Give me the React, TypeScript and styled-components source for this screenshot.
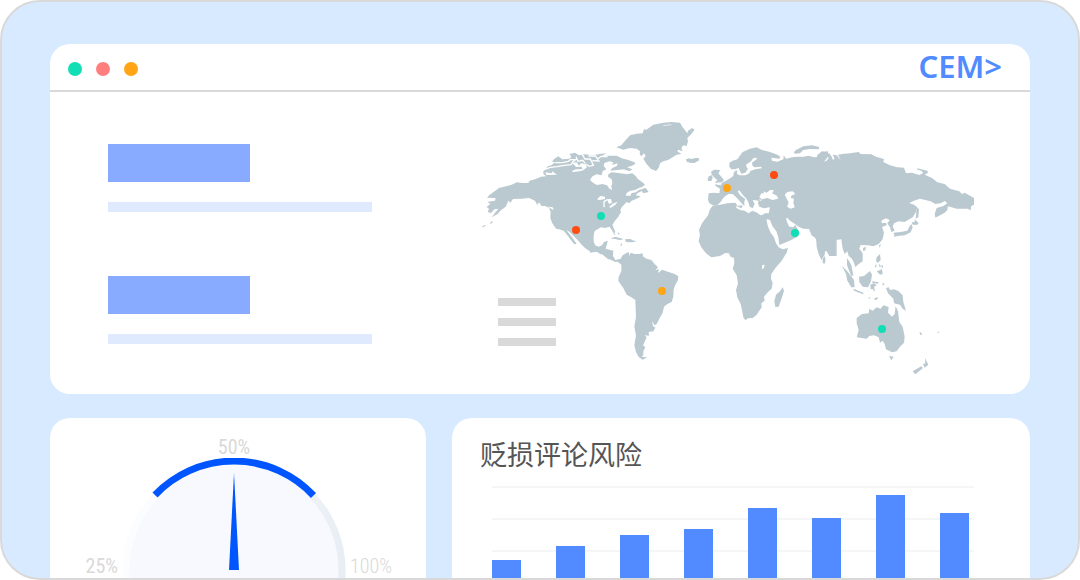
import React from "react";
import styled, { createGlobalStyle } from "styled-components";

const GlobalStyle = createGlobalStyle`
  *, *::before, *::after { box-sizing: border-box; }
  body { margin: 0; background: #fff; font-family: "Noto Sans", "Noto Sans CJK SC", sans-serif; }
  h1, h2, p { margin: 0; }
`;

const Frame = styled.main`
  height: 100vh;
  overflow: hidden;
  padding: 42px 48px 0;
  border: 2px solid #d9d9d9;
  border-radius: 40px;
  background: #d8eaff;
  display: flex;
  flex-direction: column;
  gap: 24px;
`;

const Panel = styled.section`
  flex: none;
  background: #fff;
  border-radius: 20px;
`;

const TitleBar = styled.header`
  display: flex;
  align-items: center;
  justify-content: space-between;
  height: 48px;
  padding: 0 28px 0 18px;
  border-bottom: 2px solid #d9d9d9;
`;

const Lights = styled.div`
  display: flex;
  gap: 14px;
  padding-top: 4px;
`;

const Light = styled.span<{ $color: string }>`
  width: 14px;
  height: 14px;
  border-radius: 50%;
  background: ${(p) => p.$color};
`;

const Brand = styled.h1`
  padding-bottom: 2px;
  font: 600 31px/44px "Noto Sans", sans-serif;
  color: #518bff;
`;

const Overview = styled.div`
  display: flex;
  justify-content: space-between;
  padding: 18px 50px 14px 58px;
`;

const Metrics = styled.div`
  display: flex;
  flex-direction: column;
  gap: 64px;
  padding-top: 34px;
`;

const Metric = styled.div`
  display: flex;
  flex-direction: column;
  gap: 20px;
`;

const MetricBlock = styled.div`
  width: 142px;
  height: 38px;
  background: #88abff;
`;

const MetricLine = styled.div`
  width: 264px;
  height: 10px;
  background: #dfeaff;
`;

const MapArea = styled.div`
  display: grid;
  > * { grid-area: 1 / 1; }
`;

const MapSvg = styled.svg`
  display: block;
  width: 505px;
  height: 270px;
`;

const Legend = styled.div`
  align-self: end;
  display: flex;
  flex-direction: column;
  gap: 12px;
  padding: 0 0 34px 23px;
`;

const LegendLine = styled.div`
  width: 58px;
  height: 8px;
  background: #d9d9d9;
`;

const Cards = styled.div`
  flex: none;
  display: grid;
  grid-template-columns: 376fr 578fr;
  gap: 26px;
`;

const GaugeCard = styled(Panel)`
  display: flex;
  flex-direction: column;
  align-items: center;
  padding: 18px 8px 0 0;
`;

const GaugeLabel = styled.p<{ $weight?: number }>`
  font: ${(p) => p.$weight ?? 400} 20px/22px "Roboto Condensed", "Liberation Sans Narrow", Roboto, sans-serif;
  color: #d9d9d9;
`;

const GaugeRow = styled.div`
  display: flex;
  justify-content: center;
  gap: 4px;
  > p { width: 48px; padding-top: 97px; }
  > p:first-child { text-align: right; }
`;

const GaugeSvg = styled.svg`
  display: block;
  width: 224px;
  height: 224px;
`;

const ChartCard = styled(Panel)`
  padding: 16px 56px 40px 28px;
`;

const ChartTitle = styled.h2`
  font: 400 27px/40px "Noto Sans CJK SC", sans-serif;
  color: #555;
`;

const Plot = styled.div`
  display: grid;
  height: 130px;
  margin: 12px 0 0 12px;
  > * { grid-area: 1 / 1; }
`;

const GridLines = styled.div`
  display: flex;
  flex-direction: column;
  gap: 30px;
`;

const GridLine = styled.div`
  height: 2px;
  background: #f5f6f7;
`;

const Bars = styled.div`
  display: flex;
  align-items: flex-end;
  justify-content: space-between;
  padding-right: 5px;
`;

const Bar = styled.div`
  width: 29px;
  background: #518bff;
`;

const LIGHTS = ["#12deb6", "#ff7f7f", "#ffa516"];
const BARS = [56, 70, 81, 87, 108, 98, 121, 103];
const PINS = [
  { x: 601, y: 216, color: "#12deb6" },
  { x: 576, y: 230, color: "#ff4d12" },
  { x: 662, y: 291, color: "#ffa516" },
  { x: 727, y: 188, color: "#ffa516" },
  { x: 774, y: 175, color: "#ff4d12" },
  { x: 795, y: 233, color: "#12deb6" },
  { x: 882, y: 329, color: "#12deb6" },
];

const at = (x: number, y: number) => `translate(${x} ${y}) scale(${1 / 3})`;

function WorldMap() {
  return (
    <MapSvg viewBox="475 110 505 270" role="img" aria-label="World map" fill="#bac9d0">
      {/* North America */}
      <g transform={at(475, 110)}>
        <path d="M36 263L44 254 56 246 72 234 84 231 108 225 126 217 142 219 160 219 164 212 182 207 198 200 214 199 205 192 205 184 212 177 219 168 228 166 241 157 231 155 238 146 250 139 262 148 284 146 289 140 283 132 300 128 312 136 330 133 352 136 378 131 394 130 380 138 400 137 425 137 440 145 460 150 479 157 480 163 468 168 456 172 472 178 465 183 450 180 444 188 456 193 472 190 482 198 488 206 504 218 510 224 498 233 513 235 521 246 505 250 500 243 488 249 482 256 497 259 490 264 470 272 462 280 455 276 447 284 440 292 436 300 438 306 430 320 420 332 412 344 416 354 421 366 417 371 409 358 404 350 390 354 378 352 360 362 354 378 356 396 362 408 372 412 382 408 390 396 398 394 394 408 390 419 402 422 414 425 414 440 418 450 400 448 390 440 376 428 362 424 348 426 330 414 318 402 308 390 296 378 284 366 274 360 290 380 305 401 298 403 286 388 276 374 266 362 252 358 243 356 232 340 226 324 227 306 222 293 210 288 200 288 192 277 187 285 180 272 162 264 140 266 114 267 106 278 100 272 92 290 76 302 68 312 50 322 62 306 70 296 58 298 48 309 38 306 42 297 35 290 46 283 38 275 60 272 62 264Z" />
        <path d="M21 349L31 345 32 348 24 352ZM45 339L52 332 53 337 47 342ZM407 387L420 382 438 386 444 390 434 389 418 386ZM450 388L462 387 482 394 472 397 452 395ZM430 380L434 386M437 400L442 402 439 406ZM428 366L434 372 430 374Z" />
        <g fill="#fff">
          <path d="M345 210L351 200 364 193 380 196 383 183 394 178 386 168 388 159 404 154 415 157 411 165 428 160 426 168 412 174 406 182 426 180 450 178 449 183 462 191 446 191 430 189 410 187 400 193 399 200 410 208 412 219 409 229 411 241 402 235 396 226 382 222 366 225 354 218Z" />
          <path d="M366 268L376 258 390 260 390 267 373 270ZM385 274L394 268 408 267 411 278 402 282 397 271 389 276 389 292 385 291ZM402 291L413 281 428 275 421 284 408 293ZM454 250L464 243 480 240 497 232 508 236 493 239 482 247 469 250 466 257 453 257ZM219 290L232 291 237 299 231 298ZM211 187L230 190 232 184 246 194 214 195Z" />
          <path d="M290 184L302 178 322 178 320 170 303 171 291 158 305 157 312 167 318 160 330 162 336 172 322 182 296 186Z" />
        </g>
        <g fill="none" stroke="#fff" strokeWidth="4">
          <path d="M208 179L226 172 246 170 268 166 288 164 294 156M241 158L262 158 280 154 288 148M303 140L309 154 323 151 331 160M322 134L330 147 346 147 355 166 342 169 332 162M340 138L362 138 368 148 378 139 398 140M352 152L374 153M292 156L302 149 288 149" />
        </g>
      </g>

      {/* Greenland and Iceland */}
      <g transform={at(600, 110)}>
        <path d="M49 112L64 106 74 94 90 76 110 71 128 70 132 57 138 60 160 44 190 38 215 36 240 38 248 52 262 70 264 62 276 54 284 59 272 74 262 84 264 94 260 108 250 106 244 114 248 124 234 119 232 124 244 132 230 134 218 142 204 150 190 154 180 160 176 174 168 183 152 176 138 160 130 146 137 138 132 130 124 139 119 132 120 124 110 116 90 114 70 119Z" />
        <path d="M258 148L268 145 280 150 286 145 296 144 297 150 284 158 270 158 260 155Z" />
        <path d="M190 47L214 44" stroke="#fff" strokeWidth="2" />
      </g>

      {/* Central and South America */}
      <g transform={at(590, 230)}>
        <path d="M0 0L12 0 10 34 14 46 26 50 36 46 42 36 53 33 49 46 46 56 58 59 70 62 69 78 76 90 92 86 84 94 76 96 64 90 54 80 46 73 32 73 20 65 0 68Z" />
        <path d="M80 93L92 86 98 76 108 70 116 66 118 77 122 68 134 72 150 72 157 69 160 80 170 86 184 90 194 102 204 112 196 121 206 117 205 129 216 119 236 126 254 132 265 139 264 150 256 164 251 178 250 200 245 216 232 222 222 230 218 248 208 266 200 282 194 286 186 274 189 288 196 293 190 304 176 306 177 317 164 316 170 322 162 340 159 346 166 352 160 364 160 374 156 381 172 382 158 389 146 381 138 366 133 345 138 316 133 290 138 260 136 210 124 202 110 194 100 174 85 153 86 140 94 124 94 104Z" />
        <path d="M64 24L78 21 100 27 88 29ZM109 29L124 28 127 36 111 37ZM132 32L138 33 134 37ZM91 43L97 45 93 48ZM70 8L76 13 74 16ZM84 10L90 11 87 13Z" />
      </g>

      {/* Europe, the Middle East and western Russia */}
      <g transform={at(690, 130)}>
        <path d="M56 190L72 188 88 190 90 176 77 168 75 163 92 166 96 158 108 152 118 146 130 138 131 128 138 121 143 124 140 130 148 136 166 136 178 130 181 123 196 118 215 115 214 110 192 112 187 106 186 98 200 88 200 83 190 84 184 93 168 104 170 112 174 116 166 128 154 131 148 120 146 113 136 118 124 118 118 110 118 98 128 92 142 88 158 66 180 56 200 52 216 60 240 66 262 74 271 80 268 86 244 83 246 92 262 95 280 88 281 76 288 86 306 82 322 80 340 80 356 77 366 84 380 81 388 88 386 76 400 65 414 64 414 80 400 98 420 88 440 90 440 378 418 378 410 364 385 364 380 330 368 316 360 297 340 296 326 290 312 280 300 272 292 263 288 266 292 278 298 290 310 292 316 284 322 296 329 308 322 320 304 330 290 336 268 345 265 322 259 304 247 288 240 270 232 268 222 250 236 250 240 232 222 235 208 230 204 220 206 212 196 211 188 210 194 222 188 235 179 230 175 216 168 205 158 194 148 181 143 184 150 195 166 208 163 214 163 228 155 220 140 203 128 192 116 192 106 198 98 206 92 216 82 225 72 227 58 220 54 209Z" />
        <path d="M64 124L74 119 91 120 85 130 94 140 102 150 96 157 74 158 82 150 74 144 64 132ZM53 146L57 138 66 136 68 144 64 153 54 153ZM312 66L318 60 340 49 366 46 388 51 386 58 360 57 340 60 330 70 314 71ZM138 228L158 226 155 235ZM180 244L196 242 190 246ZM0 88L20 83 27 91 12 99 0 97Z" />
        <g fill="#fff">
          <path d="M208 202L214 190 222 190 220 184 230 188 240 180 252 181 246 190 262 198 264 206 248 210 232 204 216 208ZM284 194L292 186 308 184 316 192 304 197 302 204 312 206 310 218 314 232 302 236 291 230 296 218 289 204ZM206 208L216 209 212 213Z" />
        </g>
      </g>

      {/* Africa */}
      <g transform={at(690, 200)}>
        <path d="M68 17L90 14 112 10 136 8 141 14 138 23 150 30 164 32 176 40 182 35 198 36 212 46 226 41 234 44 230 62 234 80 242 98 252 112 258 130 266 142 278 148 294 144 290 158 274 184 256 204 244 222 243 236 248 248 245 266 234 276 222 290 224 302 214 310 215 322 200 344 188 354 174 355 166 361 160 352 156 330 152 312 142 292 138 270 144 250 140 226 128 206 133 190 132 174 122 170 116 160 106 159 90 168 64 172 48 160 34 142 26 124 30 104 27 90 36 70 54 46 60 28Z" />
        <path d="M278 262L282 272 276 292 266 320 256 321 253 304 258 284 270 274Z" />
        <path fill="#fff" d="M216 196L224 194 222 204 216 208Z" />
      </g>

      {/* Asia */}
      <g transform={at(810, 130)}>
        <path d="M-2 78L20 84 22 75 36 64 46 66 44 78 38 97 50 92 56 84 50 73 58 70 66 82 70 95 73 84 68 74 80 76 92 90 84 74 96 72 120 70 146 66 152 72 184 73 198 80 222 87 220 96 240 106 262 112 282 113 288 130 306 128 328 135 340 129 334 122 322 119 322 115 352 122 354 128 344 134 366 144 382 157 404 162 420 176 448 184 456 192 464 188 492 204 492 224 484 228 482 241 472 236 440 236 414 229 412 240 404 248 376 263 374 252 380 234 400 228 412 220 404 213 392 220 376 222 362 214 330 206 312 212 298 219 312 224 322 232 318 246 308 262 284 276 266 274 252 280 248 290 254 302 244 306 240 292 232 280 239 270 228 265 214 272 216 280 228 278 230 286 216 291 222 308 218 328 206 342 190 349 174 346 152 345 148 356 158 370 158 394 146 402 136 411 132 398 124 384 116 378 112 364 104 372 98 356 94 328 78 330 62 342 46 352 44 374 34 390 26 372 20 350 18 321 6 318 -2 300Z" />
        <path d="M320 234L327 236 325 262 317 266ZM314 268L326 280 322 284 308 284 305 277 314 276ZM304 282L308 292 302 307 284 316 262 318 254 321 251 308 272 306 292 302 298 290ZM159 354L168 350 166 361 160 364ZM207 346L213 342 209 354ZM38 386L44 378 47 392 43 402 38 398Z" />
      </g>

      {/* South-east Asia and Oceania */}
      <g transform={at(800, 230)}>
        <path d="M126 108L142 124 162 150 164 172 154 172 142 152 138 132ZM141 84L149 96 154 106 160 136 154 138 145 116 141 106ZM160 176L190 188 190 193 162 182ZM177 140L192 138 210 123 216 134 213 154 204 172 188 170 178 156ZM211 164L220 160 231 166 222 170 226 186 218 177 212 178ZM216 154L236 157 234 161 218 159ZM248 158L254 162 248 168ZM206 201L212 204 207 207ZM222 206L232 201 234 206 226 211ZM230 82L240 72 242 90 234 98 228 94ZM236 100L244 110 238 110ZM224 108L230 102 228 114ZM244 104L250 108 246 116ZM230 124L246 118 248 132 240 134ZM258 174L266 172 270 180 282 178 296 184 308 196 310 216 318 242 308 236 300 224 282 220 280 206 264 190Z" />
        <path d="M170 264L186 252 206 250 208 236 218 242 230 232 242 236 250 226 266 231 264 248 276 260 284 252 287 228 294 244 298 276 308 290 314 320 312 338 300 350 290 364 276 367 258 358 254 342 248 332 240 338 236 322 222 316 208 318 200 326 170 322 176 300 170 280Z" />
        <path d="M267 378L281 380 274 391ZM338 424L364 409 369 414 346 433ZM375 384L385 404 374 413 369 402 376 400ZM358 306L364 308 366 316 361 314ZM411 308L418 304 416 309Z" />
      </g>

      {PINS.map((p) => (
        <circle key={`${p.x}-${p.y}`} cx={p.x} cy={p.y} r="4" fill={p.color} />
      ))}
    </MapSvg>
  );
}

function Gauge() {
  return (
    <GaugeSvg viewBox="-112 -112 224 224" role="img" aria-label="50%">
      <defs>
        <linearGradient id="track" gradientUnits="userSpaceOnUse" x1="-112" y1="0" x2="112" y2="0">
          <stop offset="0" stopColor="#fcfdfe" />
          <stop offset="0.6" stopColor="#f8fafc" />
          <stop offset="1" stopColor="#e7edf4" />
        </linearGradient>
      </defs>
      <circle r="108" fill="#f7f9fe" stroke="url(#track)" strokeWidth="7" />
      <path d="M-79-75A109 109 0 0 1 79.5-74.5" fill="none" stroke="#0055ff" strokeWidth="7" />
      <path d="M0-97L5 0H-5Z" fill="#0055ff" />
    </GaugeSvg>
  );
}

export default function App() {
  return (
    <>
      <GlobalStyle />
      <Frame>
        <Panel>
          <TitleBar>
            <Lights>
              {LIGHTS.map((c) => (
                <Light key={c} $color={c} />
              ))}
            </Lights>
            <Brand>CEM&gt;</Brand>
          </TitleBar>
          <Overview>
            <Metrics>
              {[0, 1].map((i) => (
                <Metric key={i}>
                  <MetricBlock />
                  <MetricLine />
                </Metric>
              ))}
            </Metrics>
            <MapArea>
              <WorldMap />
              <Legend>
                {[0, 1, 2].map((i) => (
                  <LegendLine key={i} />
                ))}
              </Legend>
            </MapArea>
          </Overview>
        </Panel>
        <Cards>
          <GaugeCard>
            <GaugeLabel>50%</GaugeLabel>
            <GaugeRow>
              <GaugeLabel>25%</GaugeLabel>
              <Gauge />
              <GaugeLabel $weight={300}>100%</GaugeLabel>
            </GaugeRow>
          </GaugeCard>
          <ChartCard>
            <ChartTitle>贬损评论风险</ChartTitle>
            <Plot>
              <GridLines>
                {[0, 1, 2, 3, 4].map((i) => (
                  <GridLine key={i} />
                ))}
              </GridLines>
              <Bars>
                {BARS.map((h, i) => (
                  <Bar key={i} style={{ height: h }} />
                ))}
              </Bars>
            </Plot>
          </ChartCard>
        </Cards>
      </Frame>
    </>
  );
}
